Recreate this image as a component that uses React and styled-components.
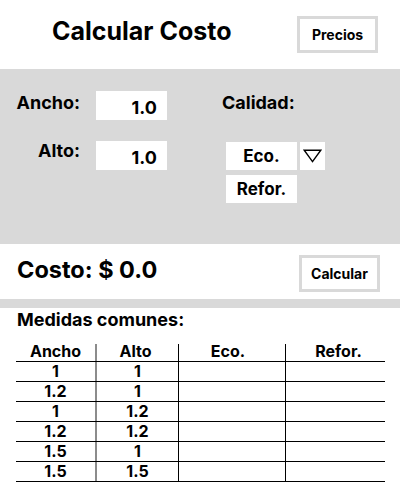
import React from "react";
import styled, { createGlobalStyle } from "styled-components";

const Global = createGlobalStyle`
  html, body { margin: 0; padding: 0; background: #ffffff; }
  body { font-family: Inter, "Noto Sans", sans-serif; color: #000; }
  * { box-sizing: border-box; }
`;

const Page = styled.div`
  width: 400px;
  height: 500px;
  display: flex;
  flex-direction: column;
  font-weight: 700;
`;

const Header = styled.header`
  height: 69px;
  display: flex;
  align-items: center;
  justify-content: space-between;
  padding: 0 22px 0 52px;
`;

const Title = styled.h1`
  margin: 0 0 7px 0;
  font-size: 25px;
  font-weight: 700;
  line-height: 28px;
`;

const OutlineButton = styled.button`
  width: 81px;
  height: 37px;
  border: 3px solid #d9d9d9;
  background: #fff;
  font-family: inherit;
  font-weight: 700;
  font-size: 14px;
  color: #000;
  padding: 0;
  margin-top: ${(p) => p.$top || 0}px;
`;

const Panel = styled.section`
  height: 175px;
  background: #d9d9d9;
  display: flex;
  padding: 22px 0 0 18px;
`;

const Fields = styled.div`
  display: flex;
  flex-direction: column;
  gap: 21px;
  width: 204px;
`;

const FieldRow = styled.div`
  display: grid;
  grid-template-columns: 62px 71px;
  column-gap: 16px;
  align-items: start;
`;

const Label = styled.span`
  font-size: 18px;
  line-height: 20px;
  white-space: nowrap;
  margin-top: ${(p) => p.$top || 0}px;
  justify-self: ${(p) => (p.$end ? "end" : "start")};
`;

const ValueBox = styled.div`
  height: 29px;
  background: #fff;
  font-size: 18px;
  line-height: 17px;
  padding: 8px 10px 0 0;
  text-align: right;
`;

const Quality = styled.div`
  display: flex;
  flex-direction: column;
`;

const OptionList = styled.div`
  display: flex;
  flex-direction: column;
  gap: 5px;
  margin: 29px 0 0 4px;
`;

const OptionRow = styled.div`
  display: flex;
  gap: 3px;
`;

const OptionBox = styled.div`
  width: 71px;
  height: 28px;
  background: #fff;
  font-size: 17px;
  line-height: 28px;
  text-align: center;
`;

const ArrowBox = styled.div`
  width: 25px;
  height: 28px;
  background: #fff;
  display: flex;
  align-items: center;
  justify-content: center;
`;

const CostRow = styled.section`
  height: 55px;
  display: flex;
  align-items: center;
  justify-content: space-between;
  padding: 0 20px 0 17px;
`;

const Cost = styled.div`
  font-size: 23.5px;
  line-height: 26px;
  margin-bottom: 3px;
`;

const Divider = styled.div`
  height: 9px;
  background: #d9d9d9;
`;

const Common = styled.section`
  padding: 2px 0 0 17px;
`;

const SubTitle = styled.h2`
  margin: 0;
  font-size: 18px;
  font-weight: 700;
  line-height: 20px;
`;

const Table = styled.div`
  width: 369px;
  margin: 12px 0 0 -1px;
  display: flex;
  flex-direction: column;
`;

const Row = styled.div`
  display: grid;
  grid-template-columns: 79px 83px 107px 100px;
  height: 20px;
  border-bottom: 1px solid #000;
`;

const Cell = styled.div`
  font-size: 16px;
  line-height: ${(p) => (p.$head ? 14 : 17)}px;
  margin-top: ${(p) => (p.$head ? 2 : 0)}px;
  padding-top: ${(p) => (p.$head ? 0 : 1)}px;
  text-align: center;
  padding-left: ${(p) => (p.$shift > 0 ? p.$shift * 2 : 0)}px;
  padding-right: ${(p) => (p.$shift < 0 ? -p.$shift * 2 : 0)}px;
  border-left: ${(p) =>
    p.$sep === "soft" ? "2px solid #8c8c8c" : p.$sep ? "1px solid #000" : "none"};
`;

const rows = [
  { w: "1", h: "1" },
  { w: "1.2", h: "1" },
  { w: "1", h: "1.2" },
  { w: "1.2", h: "1.2" },
  { w: "1.5", h: "1" },
  { w: "1.5", h: "1.5" },
];

function TriangleIcon() {
  return (
    <svg width="19" height="14" viewBox="0 0 19 14">
      <path d="M1.2 1.2 H17.8 L9.5 12.6 Z" fill="none" stroke="#000" strokeWidth="1.4" strokeLinejoin="miter" />
    </svg>
  );
}

export default function App() {
  return (
    <>
      <Global />
      <Page>
        <Header>
          <Title>Calcular Costo</Title>
          <OutlineButton>Precios</OutlineButton>
        </Header>

        <Panel>
          <Fields>
            <FieldRow>
              <Label $end $top={2}>Ancho:</Label>
              <ValueBox>1.0</ValueBox>
            </FieldRow>
            <FieldRow>
              <Label $end>Alto:</Label>
              <ValueBox>1.0</ValueBox>
            </FieldRow>
          </Fields>
          <Quality>
            <Label $top={2}>Calidad:</Label>
            <OptionList>
              <OptionRow>
                <OptionBox>Eco.</OptionBox>
                <ArrowBox>
                  <TriangleIcon />
                </ArrowBox>
              </OptionRow>
              <OptionRow>
                <OptionBox>Refor.</OptionBox>
              </OptionRow>
            </OptionList>
          </Quality>
        </Panel>

        <CostRow>
          <Cost>Costo: $ 0.0</Cost>
          <OutlineButton $top={3}>Calcular</OutlineButton>
        </CostRow>

        <Divider />

        <Common>
          <SubTitle>Medidas comunes:</SubTitle>
          <Table>
            <Row>
              <Cell $head>Ancho</Cell>
              <Cell $head $sep="soft" $shift={-2}>Alto</Cell>
              <Cell $head $sep $shift={-4}>Eco.</Cell>
              <Cell $head $sep $shift={3}>Refor.</Cell>
            </Row>
            {rows.map((r, i) => (
              <Row key={i}>
                <Cell>{r.w}</Cell>
                <Cell $sep="soft">{r.h}</Cell>
                <Cell $sep />
                <Cell $sep />
              </Row>
            ))}
          </Table>
        </Common>
      </Page>
    </>
  );
}
